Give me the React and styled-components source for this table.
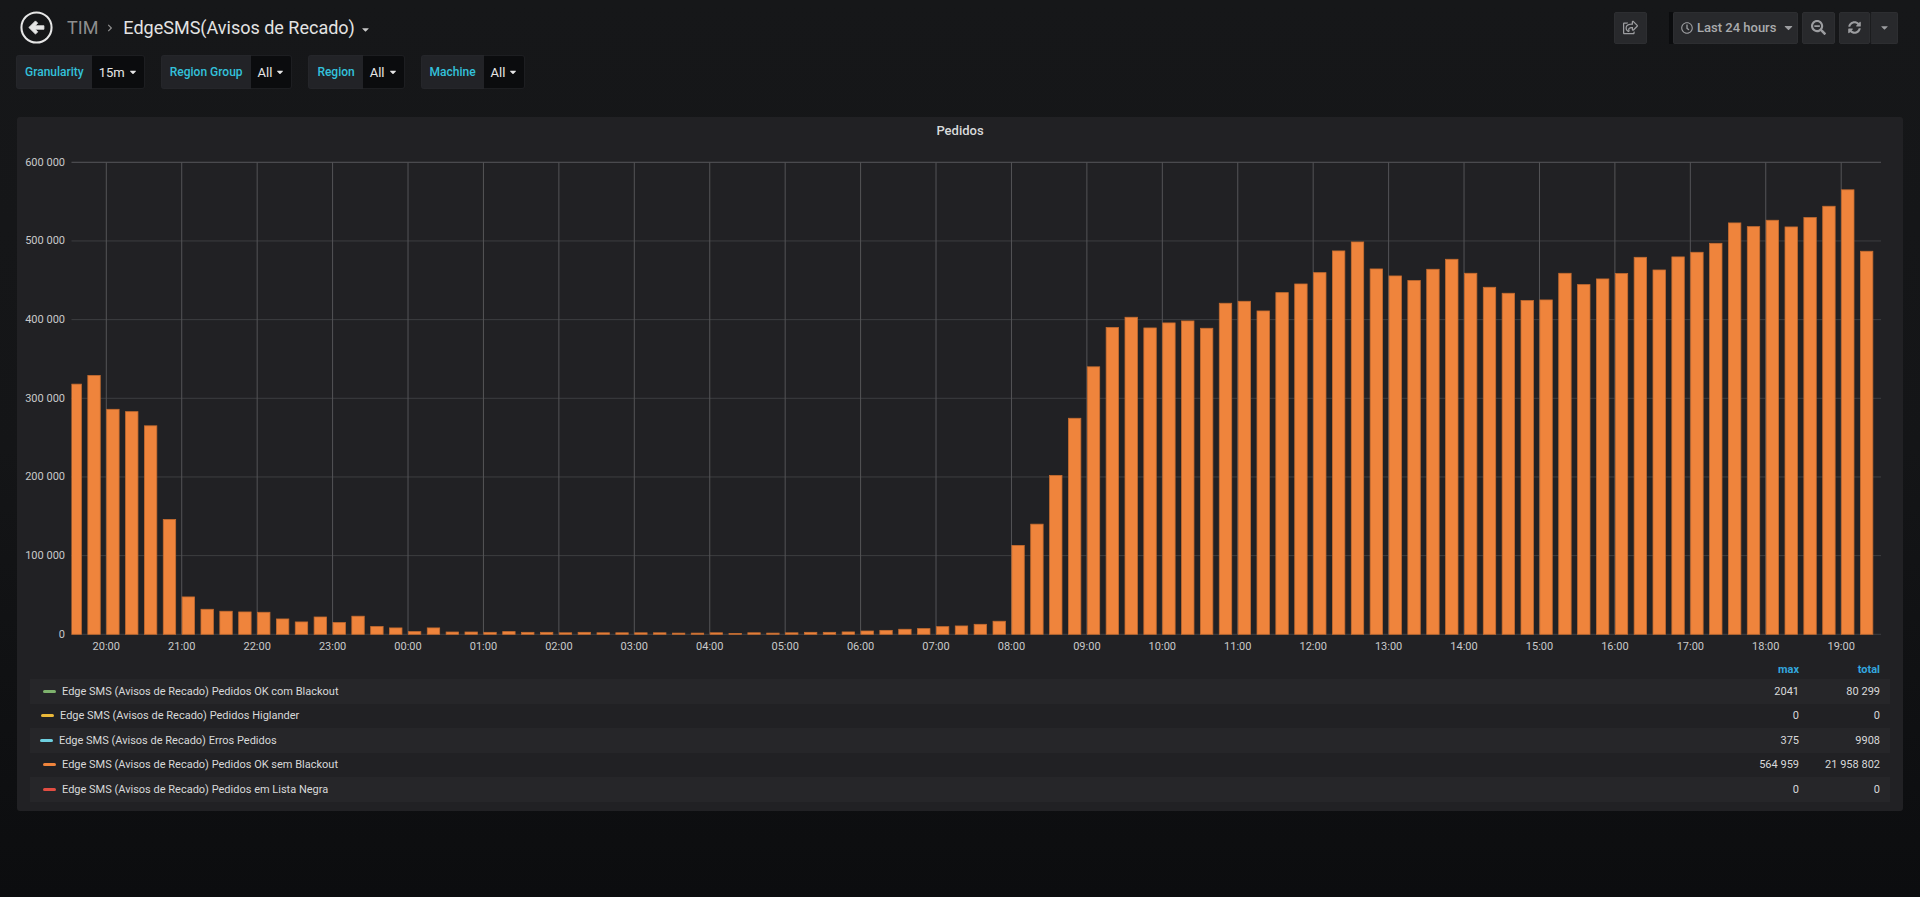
import React from "react";
import styled, { createGlobalStyle } from "styled-components";
import { FaRegShareSquare, FaSearchMinus, FaSyncAlt, FaRegClock, FaCaretDown, FaChevronRight } from "react-icons/fa";

const GlobalStyle = createGlobalStyle`
  html, body { margin: 0; padding: 0; }
  body {
    min-height: 100vh;
    background: linear-gradient(180deg, #161719 0%, #141517 50%, #0c0d0f 100%);
    font-family: Roboto, "Noto Sans", "Liberation Sans", sans-serif;
    color: #d8d9da;
  }
  #root { min-height: 100vh; }
`;

const Page = styled.div`
  display: flex;
  flex-direction: column;
`;

const Navbar = styled.div`
  height: 55px;
  display: flex;
  align-items: center;
  padding: 0 22px 0 20px;
  box-sizing: border-box;
`;

const BackButton = styled.div`
  width: 33px;
  height: 33px;
  display: flex;
  align-items: center;
  justify-content: center;
  margin-right: 14px;
`;

const Crumb = styled.span`
  font-size: 18px;
  line-height: 20px;
  color: ${(p) => (p.$muted ? "#8e8e8e" : "#e3e3e3")};
  white-space: nowrap;
`;

const CrumbSep = styled.span`
  display: flex;
  align-items: center;
  color: #8e8e8e;
  margin: 1px 9px 0 8px;
`;

const TitleCaret = styled.span`
  display: flex;
  align-items: center;
  color: #c8c8c8;
  margin: 4px 0 0 5px;
`;

const Spacer = styled.div`
  flex: 1;
`;

const NavButton = styled.div`
  height: 32px;
  width: ${(p) => p.$w || 33}px;
  box-sizing: border-box;
  display: flex;
  align-items: center;
  justify-content: ${(p) => (p.$start ? "flex-start" : "center")};
  gap: 4px;
  padding-left: ${(p) => p.$pad || 0}px;
  margin-left: ${(p) => p.$ml || 0}px;
  background: #28292c;
  border: 1px solid #2d2e31;
  border-radius: 2px;
  color: #9c9da0;
  font-size: 13px;
  font-weight: 500;
  white-space: nowrap;
`;

const NavSeparator = styled.div`
  width: 4px;
  height: 32px;
  margin-left: 22px;
  background: #0b0c0e;
`;

const ButtonGroup = styled.div`
  display: flex;
  margin-left: 4px;
  & > div + div {
    border-left: 1px solid #1b1c1e;
  }
`;

const PickerText = styled.span`
  color: #aaabad;
  margin-right: 2px;
`;

const Submenu = styled.div`
  display: flex;
  gap: 16px;
  height: 34px;
  padding-left: 16px;
`;

const VarGroup = styled.div`
  display: flex;
  height: 34px;
`;

const VarLabel = styled.div`
  display: flex;
  align-items: center;
  padding: 0 8px;
  background: #222327;
  border: 1px solid #25262a;
  border-right: none;
  border-radius: 3px 0 0 3px;
  color: #33c1db;
  font-size: 12px;
  font-weight: 500;
  white-space: nowrap;
`;

const VarValue = styled.div`
  display: flex;
  align-items: center;
  gap: 3px;
  padding: 0 6px 0 7px;
  background: #0b0c0e;
  border: 1px solid #1d1e21;
  border-left: none;
  border-radius: 0 3px 3px 0;
  color: #e6e6e6;
  font-size: 13px;
  white-space: nowrap;
`;

const Panel = styled.div`
  margin: 28px 17px 0 17px;
  height: 694px;
  box-sizing: border-box;
  background: #212124;
  border-radius: 3px;
  padding: 0 13px;
  display: flex;
  flex-direction: column;
`;

const PanelTitle = styled.div`
  height: 28px;
  line-height: 28px;
  text-align: center;
  font-size: 13px;
  font-weight: 500;
  color: #d8d9da;
`;

const ChartSvg = styled.svg`
  display: block;
  width: 1886px;
  height: 515px;
  margin: 0 -13px;
  font-family: Roboto, "Noto Sans", "Liberation Sans", sans-serif;
`;

const Legend = styled.div`
  display: flex;
  flex-direction: column;
`;

const LegendGrid = styled.div`
  display: grid;
  grid-template-columns: 1fr 90px 91px;
  align-items: center;
  height: ${(p) => p.$h}px;
  background: ${(p) => (p.$alt ? "#262629" : "transparent")};
  font-size: 11px;
  color: ${(p) => (p.$head ? "#33a6de" : "#d8d9da")};
  font-weight: ${(p) => (p.$head ? 700 : 400)};
`;

const LegendName = styled.div`
  display: flex;
  align-items: center;
  padding-left: ${(p) => p.$off}px;
  white-space: nowrap;
`;

const Swatch = styled.span`
  width: 13px;
  height: 3px;
  border-radius: 1.5px;
  background: ${(p) => p.$color};
  margin-right: 6px;
`;

const LegendValue = styled.div`
  text-align: right;
  padding-right: ${(p) => (p.$last ? 10 : 0)}px;
`;

const data = [
  318, 329, 286, 283, 265, 146, 47.5, 31.8, 29.3, 28.4,
  28, 19.5, 15.7, 22, 14.9, 23, 9.8, 8.1, 3.4, 8.1,
  2.9, 2.9, 2.5, 3.4, 2.5, 2.5, 1.9, 2.5, 1.9, 1.9,
  1.9, 1.9, 1.5, 1.5, 1.9, 1.0, 1.9, 1.5, 1.9, 2.5,
  2.5, 3.0, 4.2, 5.0, 6.4, 7.2, 9.7, 10.6, 12.7, 16.6,
  113, 140, 202, 274.6, 340, 390, 403, 389.4, 395.8, 398.3,
  389, 420.8, 423.3, 411, 434.3, 445.3, 459.7, 487.3, 498.7, 464.4,
  455.5, 449.6, 464, 476.7, 458.9, 441.1, 433.5, 424.2, 425, 458.9,
  444.5, 451.7, 458.5, 479.2, 463.1, 479.7, 485.6, 497, 522.9, 518.2,
  526.3, 517.8, 529.7, 544.1, 565, 486.9,
];

const PLOT_L = 54.5;
const PLOT_R = 1864;
const BASE = 489.3;
const PX_PER_K = 0.7867;
const HOUR0 = 89.3;
const HOUR_W = 75.43;
const STEP = HOUR_W / 4;
const BAR_W = 12.4;
const YLABEL_X = 48;

const hours = ["20:00","21:00","22:00","23:00","00:00","01:00","02:00","03:00","04:00","05:00","06:00","07:00","08:00","09:00","10:00","11:00","12:00","13:00","14:00","15:00","16:00","17:00","18:00","19:00"];
const yTicks = [0, 100, 200, 300, 400, 500, 600];

function Chart() {
  return (
    <ChartSvg>
      <defs>
        <clipPath id="plot">
          <rect x={PLOT_L} y={0} width={PLOT_R - PLOT_L} height={BASE + 1} />
        </clipPath>
      </defs>
      {yTicks.map((t) => {
        const y = BASE - t * PX_PER_K;
        return (
          <g key={t}>
            <line x1={PLOT_L} x2={PLOT_R} y1={y} y2={y} stroke={t === 600 ? "#58585b" : "#3d3e41"} strokeWidth="1" />
            <text x={YLABEL_X} y={y} textAnchor="end" dominantBaseline="central" fontSize="11" fill="#c8c9ca">
              {t === 0 ? "0" : `${t} 000`}
            </text>
          </g>
        );
      })}
      {hours.map((h, k) => {
        const x = HOUR0 + k * HOUR_W;
        return (
          <g key={h}>
            <line x1={x} x2={x} y1={BASE - 600 * PX_PER_K} y2={BASE} stroke="#545457" strokeWidth="1" />
            <text x={x} y={501} textAnchor="middle" dominantBaseline="central" fontSize="11" fill="#c8c9ca">
              {h}
            </text>
          </g>
        );
      })}
      <g clipPath="url(#plot)">
        {data.map((v, i) => {
          const h = v * PX_PER_K;
          const x = HOUR0 + (i - 2) * STEP + 0.4;
          return (
            <rect key={i} x={x} y={BASE - h} width={BAR_W} height={h} fill="#ef843c" stroke="#c56c30" strokeWidth="0.8" />
          );
        })}
      </g>
    </ChartSvg>
  );
}

const series = [
  { name: "Edge SMS (Avisos de Recado) Pedidos OK com Blackout", color: "#7eb26d", max: "2041", total: "80 299", off: 13 },
  { name: "Edge SMS (Avisos de Recado) Pedidos Higlander", color: "#eab839", max: "0", total: "0", off: 11 },
  { name: "Edge SMS (Avisos de Recado) Erros Pedidos", color: "#6ed0e0", max: "375", total: "9908", off: 10 },
  { name: "Edge SMS (Avisos de Recado) Pedidos OK sem Blackout", color: "#ef843c", max: "564 959", total: "21 958 802", off: 13 },
  { name: "Edge SMS (Avisos de Recado) Pedidos em Lista Negra", color: "#e24d42", max: "0", total: "0", off: 13 },
];

function BackIcon() {
  return (
    <svg width="33" height="33" viewBox="0 0 32 32">
      <circle cx="16" cy="16" r="14.6" fill="none" stroke="#e6e6e6" strokeWidth="2" />
      <path d="M8.6 16 L15 9.6 L17.2 11.8 L14.6 14.3 L23.2 14.3 L23.2 17.7 L14.6 17.7 L17.2 20.2 L15 22.4 Z" fill="#e6e6e6" strokeLinejoin="round" stroke="#e6e6e6" strokeWidth="0.8" />
    </svg>
  );
}

const variables = [
  { label: "Granularity", value: "15m" },
  { label: "Region Group", value: "All" },
  { label: "Region", value: "All" },
  { label: "Machine", value: "All" },
];

export default function App() {
  return (
    <Page>
      <GlobalStyle />
      <Navbar>
        <BackButton>
          <BackIcon />
        </BackButton>
        <Crumb $muted>TIM</Crumb>
        <CrumbSep>
          <FaChevronRight size={8} />
        </CrumbSep>
        <Crumb>EdgeSMS(Avisos de Recado)</Crumb>
        <TitleCaret>
          <FaCaretDown size={11} />
        </TitleCaret>
        <Spacer />
        <NavButton>
          <FaRegShareSquare size={15} />
        </NavButton>
        <NavSeparator />
        <NavButton $w={125} $pad={7} $start>
          <FaRegClock size={12} />
          <PickerText>Last 24 hours</PickerText>
          <FaCaretDown size={13} />
        </NavButton>
        <NavButton $ml={4}>
          <FaSearchMinus size={15} />
        </NavButton>
        <ButtonGroup>
          <NavButton $w={31}>
            <FaSyncAlt size={13} />
          </NavButton>
          <NavButton $w={28}>
            <FaCaretDown size={11} />
          </NavButton>
        </ButtonGroup>
      </Navbar>
      <Submenu>
        {variables.map((v) => (
          <VarGroup key={v.label}>
            <VarLabel>{v.label}</VarLabel>
            <VarValue>
              {v.value}
              <FaCaretDown size={10} />
            </VarValue>
          </VarGroup>
        ))}
      </Submenu>
      <Panel>
        <PanelTitle>Pedidos</PanelTitle>
        <Chart />
        <Legend>
          <LegendGrid $head $h={19}>
            <div />
            <LegendValue>max</LegendValue>
            <LegendValue $last>total</LegendValue>
          </LegendGrid>
          {series.map((s, i) => (
            <LegendGrid key={s.name} $h={24.5} $alt={i % 2 === 0}>
              <LegendName $off={s.off}>
                <Swatch $color={s.color} />
                {s.name}
              </LegendName>
              <LegendValue>{s.max}</LegendValue>
              <LegendValue $last>{s.total}</LegendValue>
            </LegendGrid>
          ))}
        </Legend>
      </Panel>
    </Page>
  );
}
